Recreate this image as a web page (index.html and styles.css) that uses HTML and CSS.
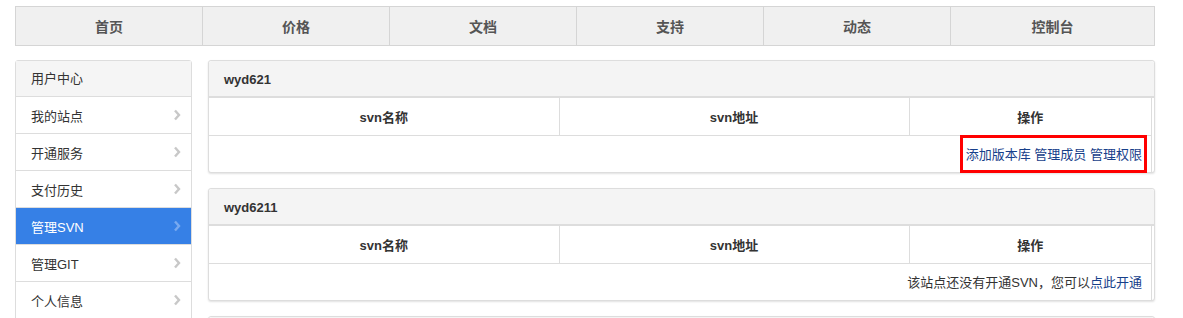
FILE: index.html
```html
<!DOCTYPE html>
<html lang="zh-CN">
<head>
    <meta charset="UTF-8">
    <title>管理SVN</title>
    <link rel="stylesheet" href="styles.css">
</head>
<body>
    <div class="container">
        <!-- Top navigation -->
        <div class="topnav">
            <a class="nav-item" href="#">首页</a>
            <a class="nav-item" href="#">价格</a>
            <a class="nav-item" href="#">文档</a>
            <a class="nav-item" href="#">支持</a>
            <a class="nav-item" href="#">动态</a>
            <a class="nav-item" href="#">控制台</a>
        </div>

        <div class="layout">
            <!-- Sidebar -->
            <div class="sidebar">
                <div class="side-title">用户中心</div>
                <a class="side-item" href="#">我的站点<svg class="chev" viewBox="0 0 8 12"><polyline points="2,1.5 6,6 2,10.5"/></svg></a>
                <a class="side-item" href="#">开通服务<svg class="chev" viewBox="0 0 8 12"><polyline points="2,1.5 6,6 2,10.5"/></svg></a>
                <a class="side-item" href="#">支付历史<svg class="chev" viewBox="0 0 8 12"><polyline points="2,1.5 6,6 2,10.5"/></svg></a>
                <a class="side-item active" href="#">管理SVN<svg class="chev" viewBox="0 0 8 12"><polyline points="2,1.5 6,6 2,10.5"/></svg></a>
                <a class="side-item" href="#">管理GIT<svg class="chev" viewBox="0 0 8 12"><polyline points="2,1.5 6,6 2,10.5"/></svg></a>
                <a class="side-item" href="#">个人信息<svg class="chev" viewBox="0 0 8 12"><polyline points="2,1.5 6,6 2,10.5"/></svg></a>
            </div>

            <!-- Site panels -->
            <div class="main">
                <div class="panel">
                    <div class="panel-head">wyd621</div>
                    <table class="svn-table">
                        <tr>
                            <th class="col-name">svn名称</th>
                            <th class="col-addr">svn地址</th>
                            <th>操作</th>
                        </tr>
                        <tr>
                            <td colspan="3" class="actions">
                                <span class="marked"><a href="#">添加版本库</a> <a href="#">管理成员</a> <a href="#">管理权限</a></span>
                            </td>
                        </tr>
                    </table>
                </div>

                <div class="panel">
                    <div class="panel-head">wyd6211</div>
                    <table class="svn-table">
                        <tr>
                            <th class="col-name">svn名称</th>
                            <th class="col-addr">svn地址</th>
                            <th>操作</th>
                        </tr>
                        <tr>
                            <td colspan="3" class="actions">该站点还没有开通SVN，您可以<a href="#">点此开通</a></td>
                        </tr>
                    </table>
                </div>

                <div class="panel">
                    <div class="panel-head"></div>
                </div>
            </div>
        </div>
    </div>
</body>
</html>
```

FILE: styles.css
```css
* {
    box-sizing: border-box;
    margin: 0;
    padding: 0;
}

body {
    font-family: 'Liberation Sans', Arial, 'Noto Sans CJK SC', sans-serif;
    font-size: 13px;
    color: #333;
    background: #fff;
    padding: 6px 0 0 15px;
}

a {
    text-decoration: none;
}

.container {
    width: 1140px;
}

/* Top navigation */
.topnav {
    display: grid;
    grid-template-columns: repeat(5, 187px) 1fr;
    height: 40px;
    background: #f0f0f0;
    border: 1px solid #d5d5d5;
}

.nav-item {
    display: flex;
    align-items: center;
    justify-content: center;
    color: #555;
    font-size: 14px;
    font-weight: bold;
    border-right: 1px solid #d5d5d5;
}

.nav-item:last-child {
    border-right: none;
}

.layout {
    display: flex;
    gap: 16px;
    margin-top: 14px;
    align-items: flex-start;
}

/* Sidebar */
.sidebar {
    width: 177px;
    flex-shrink: 0;
    border: 1px solid #ddd;
    border-radius: 3px 3px 0 0;
}

.side-title {
    height: 36px;
    line-height: 36px;
    padding-left: 15px;
    background: #f5f5f5;
    border-bottom: 1px solid #ddd;
}

.side-item {
    display: flex;
    align-items: center;
    justify-content: space-between;
    height: 37px;
    padding: 0 10px 0 15px;
    color: #333;
    border-bottom: 1px solid #ddd;
}

.side-item.active {
    background: #3680e6;
    color: #fff;
}

.chev {
    width: 8px;
    height: 12px;
    fill: none;
    stroke: #c8c8c8;
    stroke-width: 2.4;
}

.side-item.active .chev {
    stroke: #78a9f0;
}

/* Panels */
.main {
    flex: 1;
    display: flex;
    flex-direction: column;
    gap: 15px;
}

.panel {
    border: 1px solid #ddd;
    border-radius: 3px;
    box-shadow: 0 1px 2px rgba(0,0,0,0.12);
    background: #fff;
}

.panel-head {
    height: 37px;
    line-height: 37px;
    padding-left: 15px;
    background: #f4f4f4;
    border-bottom: 2px solid #ddd;
    border-radius: 3px 3px 0 0;
    font-weight: bold;
}

.svn-table {
    width: calc(100% - 2px);
    border-collapse: collapse;
    border-right: 1px solid #ddd;
}

.svn-table th {
    height: 37px;
    font-weight: bold;
    text-align: center;
    border-right: 1px solid #ddd;
    border-bottom: 1px solid #ddd;
}

.col-name,
.col-addr {
    width: 350px;
}

.svn-table td {
    height: 37px;
    padding-right: 9px;
}

.actions {
    text-align: right;
}

.actions a {
    color: #17408a;
}

/* Highlight annotation around the action links */
.marked {
    position: relative;
}

.marked::after {
    content: "";
    position: absolute;
    top: -12px;
    bottom: -11px;
    left: -6px;
    right: -5px;
    border: 3px solid #f00;
}
```
